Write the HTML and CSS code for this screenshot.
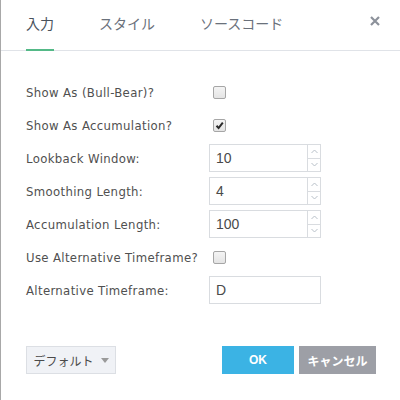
FILE: index.html
```html
<!DOCTYPE html>
<html lang="ja">
<head>
<meta charset="utf-8">
<link rel="stylesheet" href="styles.css">
</head>
<body>
<div class="dialog">
  <div class="header">
    <div class="tab active">入力</div>
    <div class="tab">スタイル</div>
    <div class="tab">ソースコード</div>
    <div class="close">
      <svg width="10" height="10" viewBox="0 0 10 10"><path d="M1 1 L9 9 M9 1 L1 9" stroke="#8c919a" stroke-width="2.2" fill="none"/></svg>
    </div>
  </div>
  <div class="form">
    <div class="row">
      <div class="label">Show As (Bull-Bear)?</div>
      <span class="check"></span>
    </div>
    <div class="row">
      <div class="label">Show As Accumulation?</div>
      <span class="check">
        <svg width="11" height="11" viewBox="0 0 11 11"><path d="M2.5 5.8 L4.6 8 L8.8 2.6" stroke="#2a2a2a" stroke-width="2" fill="none"/></svg>
      </span>
    </div>
    <div class="row">
      <div class="label">Lookback Window:</div>
      <div class="input num"><span class="val">10</span><span class="spin"><span class="up"><svg width="7" height="5" viewBox="0 0 7 5"><path d="M0.5 4 L3.5 1 L6.5 4" stroke="#b8c0c8" fill="none"/></svg></span><span class="down"><svg width="7" height="5" viewBox="0 0 7 5"><path d="M0.5 1 L3.5 4 L6.5 1" stroke="#b8c0c8" fill="none"/></svg></span></span></div>
    </div>
    <div class="row">
      <div class="label">Smoothing Length:</div>
      <div class="input num"><span class="val">4</span><span class="spin"><span class="up"><svg width="7" height="5" viewBox="0 0 7 5"><path d="M0.5 4 L3.5 1 L6.5 4" stroke="#b8c0c8" fill="none"/></svg></span><span class="down"><svg width="7" height="5" viewBox="0 0 7 5"><path d="M0.5 1 L3.5 4 L6.5 1" stroke="#b8c0c8" fill="none"/></svg></span></span></div>
    </div>
    <div class="row">
      <div class="label">Accumulation Length:</div>
      <div class="input num"><span class="val">100</span><span class="spin"><span class="up"><svg width="7" height="5" viewBox="0 0 7 5"><path d="M0.5 4 L3.5 1 L6.5 4" stroke="#b8c0c8" fill="none"/></svg></span><span class="down"><svg width="7" height="5" viewBox="0 0 7 5"><path d="M0.5 1 L3.5 4 L6.5 1" stroke="#b8c0c8" fill="none"/></svg></span></span></div>
    </div>
    <div class="row">
      <div class="label">Use Alternative Timeframe?</div>
      <span class="check"></span>
    </div>
    <div class="row">
      <div class="label">Alternative Timeframe:</div>
      <div class="input"><span class="val">D</span></div>
    </div>
  </div>
  <div class="footer">
    <div class="btn default">デフォルト<span class="caret"></span></div>
    <div class="spacer"></div>
    <div class="btn ok">OK</div>
    <div class="btn cancel">キャンセル</div>
  </div>
</div>
</body>
</html>
```

FILE: styles.css
```css
html, body {
  margin: 0;
  padding: 0;
  background: #ffffff;
}
.dialog {
  width: 399px;
  height: 400px;
  border-left: 1px solid #a8a8a8;
  display: flex;
  flex-direction: column;
  font-family: "Open Sans", "Noto Sans CJK JP", sans-serif;
  color: #4a4a4a;
}
.header {
  height: 50px;
  border-bottom: 1px solid #e0e3e8;
  display: flex;
  padding-left: 25px;
  gap: 45px;
  font-family: "Noto Sans CJK JP", sans-serif;
  font-size: 14px;
}
.tab {
  box-sizing: border-box;
  padding-top: 13px;
  line-height: 20px;
  color: #6a717b;
  margin-bottom: -1px;
  border-bottom: 2px solid transparent;
}
.tab.active {
  color: #4a525c;
  border-bottom-color: #53b987;
}
.close {
  margin-left: auto;
  padding: 16px 20px 0 0;
}
.close svg {
  display: block;
}
.form {
  padding: 27px 0 0 25px;
  display: flex;
  flex-direction: column;
  gap: 5px;
}
.row {
  height: 28px;
  display: flex;
  align-items: center;
  font-family: "DejaVu Sans Condensed", "DejaVu Sans", sans-serif;
  font-size: 13px;
  letter-spacing: 0.35px;
  color: #505050;
}
.label {
  width: 183px;
  flex: none;
}
.check {
  box-sizing: border-box;
  width: 13px;
  height: 13px;
  margin-left: 4px;
  border: 1px solid #a6a6a6;
  border-radius: 2px;
  background: linear-gradient(#f4f4f4, #e4e4e4);
  display: flex;
  align-items: center;
  justify-content: center;
}
.input {
  box-sizing: border-box;
  width: 112px;
  height: 28px;
  border: 1px solid #d9dce0;
  display: flex;
  font-family: "Liberation Sans", sans-serif;
  font-size: 14px;
  letter-spacing: 0;
  color: #4a4a4a;
}
.val {
  flex: 1;
  padding-left: 6px;
  line-height: 26px;
}
.spin {
  width: 12px;
  border-left: 1px solid #d9dce0;
  display: flex;
  flex-direction: column;
}
.spin span {
  flex: 1;
  display: flex;
  align-items: center;
  justify-content: center;
}
.spin .up {
  border-bottom: 1px solid #d9dce0;
}
.footer {
  margin-top: 42px;
  display: flex;
  padding: 0 24px 0 25px;
  gap: 5px;
}
.spacer {
  flex: 1;
}
.btn {
  box-sizing: border-box;
  height: 28px;
  display: flex;
  align-items: center;
  justify-content: center;
  font-family: "Noto Sans CJK JP", sans-serif;
  font-size: 12px;
}
.default {
  width: 90px;
  background: #f0f2f6;
  border: 1px solid #dcdfe4;
  color: #4a4a4a;
  gap: 7px;
}
.caret {
  width: 0;
  height: 0;
  border-left: 4px solid transparent;
  border-right: 4px solid transparent;
  border-top: 5px solid #9a9a9a;
}
.ok {
  width: 72px;
  background: #3bb3e4;
  color: #ffffff;
  font-family: "Liberation Sans", sans-serif;
  font-weight: bold;
}
.cancel {
  width: 77px;
  background: #9d9fa6;
  color: #ffffff;
  font-weight: bold;
}
```
